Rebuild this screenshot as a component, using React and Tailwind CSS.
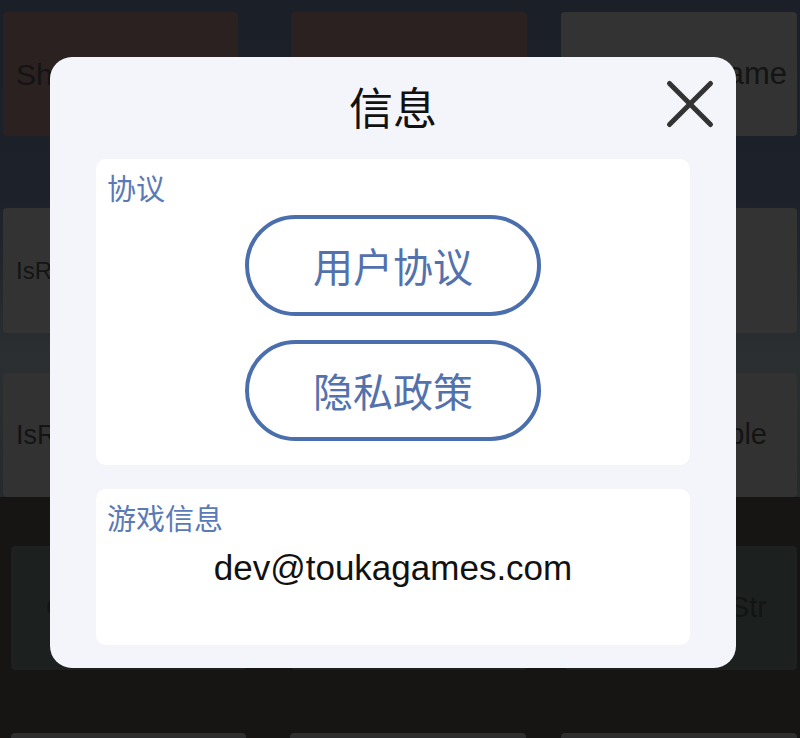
import React from 'react';

function BgButton({ className, textClass, children }) {
  return (
    <div className={`flex h-full items-center rounded-[4px] overflow-hidden whitespace-nowrap text-[#141414] ${className}`}>
      <span className={textClass}>{children}</span>
    </div>
  );
}

function CloseIcon() {
  return (
    <svg width="50" height="50" viewBox="0 0 50 50" className="block">
      <line x1="4.5" y1="4.5" x2="45.5" y2="45.5" stroke="#333333" strokeWidth="5" strokeLinecap="round" />
      <line x1="45.5" y1="4.5" x2="4.5" y2="45.5" stroke="#333333" strokeWidth="5" strokeLinecap="round" />
    </svg>
  );
}

function PillButton({ children }) {
  return (
    <button className="mx-auto flex h-[101px] w-[296px] items-center justify-center rounded-full border-[4px] border-[#4b6ead] bg-white pb-[2px] text-[40px] leading-none text-[#5372ad]">
      {children}
    </button>
  );
}

export default function App() {
  return (
    <div className="relative h-[738px] w-[800px] overflow-hidden bg-[#161514] font-['Liberation_Sans',sans-serif]">
      {/* page behind the dialog */}
      <div className="h-[497px] bg-[linear-gradient(180deg,#1b1f28_0%,#1d2129_40%,#2b2f31_72%,#272a2a_100%)] pt-[12px]">
        <div className="grid h-[124px] grid-cols-[235px_236px_236px] pl-[3px]">
          <BgButton className="bg-[#2a2120] text-[30px]" textClass="pl-[13px]">ShowAd</BgButton>
          <div className="ml-[53px] w-[236px]">
            <BgButton className="bg-[#2a2120] text-[30px]" textClass="pl-[13px]">ShowAd</BgButton>
          </div>
          <div className="ml-[87px] w-[236px]">
            <BgButton className="justify-end bg-[#333333] text-[31px]" textClass="pr-[10px]">Game</BgButton>
          </div>
        </div>
        <div className="mt-[72px] grid h-[125px] grid-cols-[235px_236px_236px] pl-[3px]">
          <BgButton className="bg-[#333333] text-[24px]" textClass="pl-[13px]">IsReady</BgButton>
          <div className="ml-[53px] w-[236px]">
            <BgButton className="bg-[#333333] text-[24px]" textClass="pl-[13px]">IsShown</BgButton>
          </div>
          <div className="ml-[87px] w-[236px]">
            <BgButton className="bg-[#333333] text-[24px]" textClass="pl-[13px]">Hide</BgButton>
          </div>
        </div>
        <div className="mt-[40px] grid h-[124px] grid-cols-[235px_236px_236px] pl-[3px]">
          <BgButton className="bg-[#323232] text-[27px]" textClass="pl-[13px]">IsReady</BgButton>
          <div className="ml-[53px] w-[236px]">
            <BgButton className="bg-[#323232] text-[27px]" textClass="pl-[13px]">Vibrate</BgButton>
          </div>
          <div className="ml-[87px] w-[236px]">
            <BgButton className="justify-end bg-[#323232] text-[29px]" textClass="pr-[30px]">Sample</BgButton>
          </div>
        </div>
      </div>
      <div className="pt-[49px]">
        <div className="grid h-[124px] grid-cols-[235px_236px_232px] pl-[11px]">
          <BgButton className="bg-[#1c2120] text-[29px]" textClass="pl-[35px]">GetInt</BgButton>
          <div className="ml-[45px] w-[236px]">
            <BgButton className="bg-[#1c2120] text-[29px]" textClass="pl-[13px]">GetFloat</BgButton>
          </div>
          <div className="ml-[83px] w-[232px]">
            <BgButton className="justify-end bg-[#1c2120] text-[29px]" textClass="pr-[30px]">GetStr</BgButton>
          </div>
        </div>
        <div className="mt-[63px] grid h-[40px] grid-cols-[235px_236px_236px] pl-[11px]">
          <BgButton className="bg-[#2e2e2e]" />
          <div className="ml-[44px] w-[236px]">
            <BgButton className="bg-[#2e2e2e]" />
          </div>
          <div className="ml-[79px] w-[236px]">
            <BgButton className="bg-[#2e2e2e]" />
          </div>
        </div>
      </div>

      {/* info dialog */}
      <div className="absolute left-[50px] top-[57px] flex h-[611px] w-[686px] flex-col rounded-[22px] bg-[#f4f5fa] px-[46px] pt-[24px] font-['Noto_Sans_CJK_SC',sans-serif]">
        <h1 className="h-[50px] text-center text-[44px] font-normal leading-[50px] text-[#111111]">信息</h1>
        <button className="absolute left-[615px] top-[22px]">
          <CloseIcon />
        </button>

        <section className="mt-[28px] flex h-[306px] flex-col rounded-[10px] bg-white px-[11px] pt-[12px]">
          <h2 className="h-[32px] text-[29px] leading-[32px] text-[#5a7ab6]">协议</h2>
          <div className="mt-[12px] flex flex-col gap-[24px]">
            <PillButton>用户协议</PillButton>
            <PillButton>隐私政策</PillButton>
          </div>
        </section>

        <section className="mt-[24px] h-[156px] rounded-[10px] bg-white px-[11px] pt-[12px]">
          <h2 className="h-[32px] text-[29px] leading-[32px] text-[#5a7ab6]">游戏信息</h2>
          <p className="mt-[15px] text-center font-['Liberation_Sans',sans-serif] text-[35px] leading-[40px] text-[#111111]">
            dev@toukagames.com
          </p>
        </section>
      </div>
    </div>
  );
}
